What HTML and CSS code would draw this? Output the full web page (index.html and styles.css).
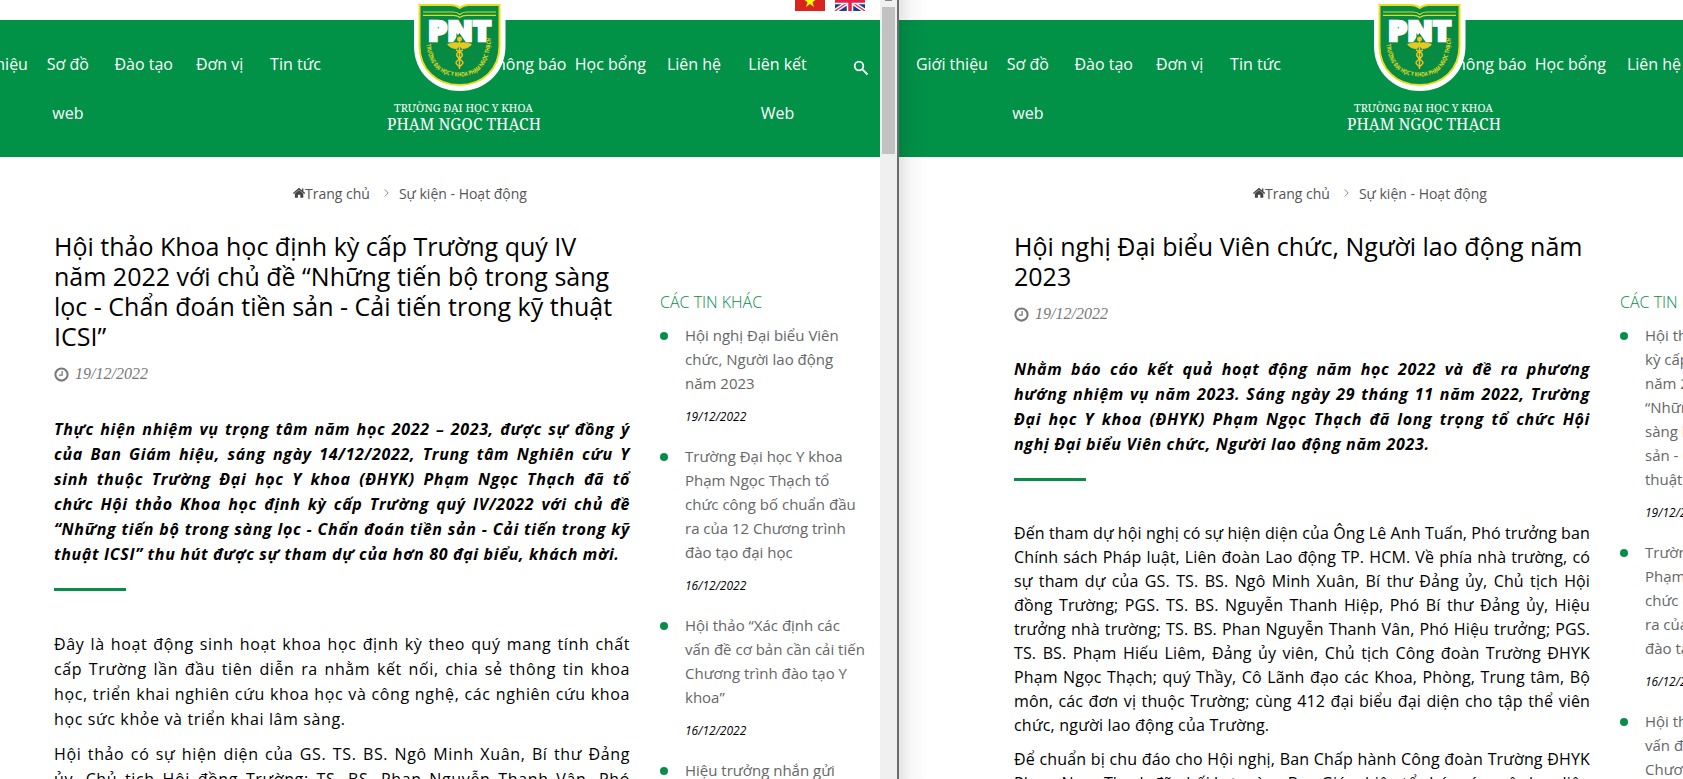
FILE: index.html
```html
<!DOCTYPE html>
<html lang="vi">
<head>
<meta charset="utf-8">
<title>Trường Đại học Y khoa Phạm Ngọc Thạch</title>
<link rel="stylesheet" href="styles.css">
</head>
<body>
<svg class="defs" width="0" height="0" aria-hidden="true">
  <symbol id="logo" viewBox="0 0 160 132">
    <path d="M34 0H125.500V46C125.500 72 106 91 79.750 91S34 72 34 46Z" fill="#fff"/>
    <path d="M39.500 5H71Q76 5 79.750 8Q83.500 5 88.500 5H119.500V46C119.500 69 102.500 85 79.500 85S39.500 69 39.500 46Z" fill="#078a42" stroke="#e9dc1f" stroke-width="2"/>
    <path d="M43 12H73Q77 12 79.750 14.500Q82.500 12 86.500 12H116M43 15.300H73Q77 15.300 79.750 17.500Q82.500 15.300 86.500 15.300H116" fill="none" stroke="#d8dc2a" stroke-width="1.200"/>
    <text class="pnt" x="48" y="41" textLength="63" lengthAdjust="spacingAndGlyphs">PNT</text>
    <path d="M72 44L79.500 33L87 44Z" fill="#078a42"/>
    <g fill="none" stroke="#e6c728" stroke-width="1.500">
      <path d="M79.500 41V69"/>
      <path d="M76 50Q84 53 82 56T77 61T80 67M83 50Q75 53 77 56T82 61T79 67"/>
    </g>
    <circle cx="79.500" cy="39" r="2.500" fill="#e6c728"/>
    <path d="M79.500 43Q75 41 67 44Q70 49 77 49L79.500 46L82 49Q89 49 92 44Q84 41 79.500 43Z" fill="#e6c728"/>
    <path id="arc" d="M46.500 44C48 66 61 76.500 79.500 76.500S111 66 111.500 30" fill="none"/>
    <text class="ring"><textPath href="#arc" textLength="108" lengthAdjust="spacingAndGlyphs">TRƯỜNG ĐẠI HỌC Y KHOA PHẠM NGỌC THẠCH</textPath></text>
    <text class="name-s" x="14" y="112" textLength="139" lengthAdjust="spacingAndGlyphs">TRƯỜNG ĐẠI HỌC Y KHOA</text>
    <text class="name-l" x="7" y="130" textLength="154" lengthAdjust="spacingAndGlyphs">PHẠM NGỌC THẠCH</text>
  </symbol>
  <symbol id="home" viewBox="0 0 12 11">
    <path d="M6 2.600L10.300 6V10.200H7.300V7.200H4.900V10.200H1.900V6Z"/>
    <path d="M0.400 5.900L6 1.200L11.800 5.900M9.700 1V4.200" fill="none" stroke="currentColor" stroke-width="1.300"/>
  </symbol>
  <symbol id="clock" viewBox="0 0 14 14">
    <circle cx="7" cy="7" r="5.700" fill="none" stroke="currentColor" stroke-width="1.900"/>
    <path d="M7.600 3.800V7.600H4.600" fill="none" stroke="currentColor" stroke-width="1.200"/>
  </symbol>
</svg>

<div class="desktop">
  <section class="pane pane-left">
    <div class="page">
      <div class="topbar">
        <svg class="flag" viewBox="0 0 30 20"><path fill="#d9251d" d="M0 0H30V20H0Z"/><path fill="#ff0" d="M15 3.500L16.600 8.200H21.500L17.500 11.200L19 16L15 13.100L11 16L12.500 11.200L8.500 8.200H13.400Z"/></svg>
        <svg class="flag" viewBox="0 0 30 20"><path fill="#1d3f93" d="M0 0H30V20H0Z"/><path d="M0 0L30 20M30 0L0 20" stroke="#fff" stroke-width="4"/><path d="M0 0L30 20M30 0L0 20" stroke="#e0234a" stroke-width="1.200"/><path d="M15 0V20M0 10H30" stroke="#fff" stroke-width="6.500"/><path d="M15 0V20M0 10H30" stroke="#e8204a" stroke-width="3.500"/></svg>
      </div>
      <header class="header">
        <nav class="nav nav-a"><a>Giới thiệu</a><a>Sơ đồ<br>web</a><a>Đào tạo</a><a>Đơn vị</a><a>Tin tức</a></nav>
        <nav class="nav nav-b"><a>Thông báo</a><a>Học bổng</a><a>Liên hệ</a><a>Liên kết<br>Web</a></nav>
        <svg class="search" viewBox="0 0 16 16"><circle cx="6" cy="6" r="4.300"/><path d="M9.200 9.200L14.500 14.500"/></svg>
        <svg class="logo"><use href="#logo"/></svg>
      </header>
      <div class="crumbs"><svg class="home"><use href="#home"/></svg><span>Trang chủ</span><svg class="chev" viewBox="0 0 5 8"><path d="M0.700 0.500L4.200 4L0.700 7.500"/></svg><span>Sự kiện - Hoạt động</span></div>
      <div class="columns">
        <article class="article">
          <h1>Hội thảo Khoa học định kỳ cấp Trường quý IV năm 2022 với chủ đề “Những tiến bộ trong sàng lọc - Chẩn đoán tiền sản - Cải tiến trong kỹ thuật ICSI”</h1>
          <div class="date"><svg class="clock"><use href="#clock"/></svg><span>19/12/2022</span></div>
          <p class="lead">Thực hiện nhiệm vụ trọng tâm năm học 2022 – 2023, được sự đồng ý của Ban Giám hiệu, sáng ngày 14/12/2022, Trung tâm Nghiên cứu Y sinh thuộc Trường Đại học Y khoa (ĐHYK) Phạm Ngọc Thạch đã tổ <span class="keep">chức Hội</span> thảo Khoa học định kỳ cấp Trường quý IV/2022 với chủ đề “Những tiến bộ trong sàng lọc - Chẩn đoán tiền sản - Cải tiến trong kỹ thuật ICSI” thu hút được sự tham dự của hơn 80 đại biểu, khách mời.</p>
          <div class="rule"></div>
          <div class="body body-wide">
            <p>Đây là hoạt động sinh hoạt khoa học định kỳ theo quý mang tính chất cấp Trường lần đầu tiên diễn ra nhằm kết nối, chia sẻ thông tin khoa học, triển khai nghiên cứu khoa học và công nghệ, các nghiên cứu khoa học sức khỏe và triển khai lâm sàng.</p>
            <p>Hội thảo có sự hiện diện của GS. TS. BS. Ngô Minh Xuân, Bí thư Đảng ủy, Chủ tịch Hội đồng Trường; TS. BS. Phan Nguyễn Thanh Vân, Phó Hiệu trưởng.</p>
          </div>
        </article>
        <aside class="aside">
          <h2>CÁC TIN KHÁC</h2>
          <ul>
            <li><a>Hội nghị Đại biểu Viên chức, Người lao động năm 2023</a><time>19/12/2022</time></li>
            <li><a>Trường Đại học Y khoa Phạm Ngọc Thạch tổ chức công bố chuẩn đầu ra của 12 Chương trình đào tạo đại học</a><time>16/12/2022</time></li>
            <li><a>Hội thảo “Xác định các vấn đề cơ bản cần cải tiến Chương trình đào tạo Y khoa”</a><time>16/12/2022</time></li>
            <li><a>Hiệu trưởng nhắn gửi</a></li>
          </ul>
        </aside>
      </div>
    </div>
  </section>
  <div class="scrollbar"><div class="arrow"></div><div class="thumb"></div></div>
  <section class="pane pane-right">
    <div class="page">
      <div class="topbar"></div>
      <header class="header">
        <nav class="nav nav-a"><a>Giới thiệu</a><a>Sơ đồ<br>web</a><a>Đào tạo</a><a>Đơn vị</a><a>Tin tức</a></nav>
        <nav class="nav nav-b"><a>Thông báo</a><a>Học bổng</a><a>Liên hệ</a></nav>
        <svg class="logo"><use href="#logo"/></svg>
      </header>
      <div class="crumbs"><svg class="home"><use href="#home"/></svg><span>Trang chủ</span><svg class="chev" viewBox="0 0 5 8"><path d="M0.700 0.500L4.200 4L0.700 7.500"/></svg><span>Sự kiện - Hoạt động</span></div>
      <div class="columns">
        <article class="article">
          <h1>Hội nghị Đại biểu Viên chức, Người lao động năm 2023</h1>
          <div class="date"><svg class="clock"><use href="#clock"/></svg><span>19/12/2022</span></div>
          <p class="lead">Nhằm báo cáo kết quả hoạt động năm học 2022 và đề ra phương hướng nhiệm vụ năm 2023. Sáng ngày 29 tháng 11 năm 2022, Trường Đại học Y khoa (ĐHYK) Phạm Ngọc Thạch đã long trọng tổ chức Hội nghị Đại biểu Viên chức, Người lao động năm 2023.</p>
          <div class="rule"></div>
          <div class="body">
            <p>
              <span class="line">Đến tham dự hội nghị có sự hiện diện của Ông Lê Anh Tuấn, Phó trưởng ban</span>
              <span class="line">Chính sách Pháp luật, Liên đoàn Lao động TP. HCM. Về phía nhà trường, có</span>
              <span class="line">sự tham dự của GS. TS. BS. Ngô Minh Xuân, Bí thư Đảng ủy, Chủ tịch Hội</span>
              <span class="line">đồng Trường; PGS. TS. BS. Nguyễn Thanh Hiệp, Phó Bí thư Đảng ủy, Hiệu</span>
              <span class="line">trưởng nhà trường; TS. BS. Phan Nguyễn Thanh Vân, Phó Hiệu trưởng; PGS.</span>
              <span class="line">TS. BS. Phạm Hiếu Liêm, Đảng ủy viên, Chủ tịch Công đoàn Trường ĐHYK</span>
              <span class="line">Phạm Ngọc Thạch; quý Thầy, Cô Lãnh đạo các Khoa, Phòng, Trung tâm, Bộ</span>
              <span class="line">môn, các đơn vị thuộc Trường; cùng 412 đại biểu đại diện cho tập thể viên</span>
              <span class="line last">chức, người lao động của Trường.</span>
            </p>
            <p>
              <span class="line">Để chuẩn bị chu đáo cho Hội nghị, Ban Chấp hành Công đoàn Trường ĐHYK</span>
              <span class="line">Phạm Ngọc Thạch đã phối hợp cùng Ban Giám hiệu tổ chức các cuộc họp liên</span>
            </p>
          </div>
        </article>
        <aside class="aside">
          <h2>CÁC TIN KHÁC</h2>
          <ul>
            <li><a>Hội thảo Khoa học định kỳ cấp Trường quý IV năm 2022 với chủ đề “Những tiến bộ trong sàng lọc - Chẩn đoán tiền sản - Cải tiến trong kỹ thuật ICSI”</a><time>19/12/2022</time></li>
            <li><a>Trường Đại học Y khoa Phạm Ngọc Thạch tổ chức công bố chuẩn đầu ra của 12 Chương trình đào tạo đại học</a><time>16/12/2022</time></li>
            <li><a>Hội thảo “Xác định các vấn đề cơ bản cần cải tiến Chương trình đào tạo Y khoa”</a></li>
          </ul>
        </aside>
      </div>
    </div>
  </section>
</div>
</body>
</html>
```
FILE: styles.css
```css
* { box-sizing: border-box; }
body { margin: 0; background: #fff; font-family: "Open Sans", "Noto Sans", sans-serif; color: #000; overflow: hidden; }
h1, h2, p, ul { margin: 0; padding: 0; font-weight: 400; }
.defs { position: absolute; }
.desktop { display: flex; width: 1683px; height: 779px; overflow: hidden; }
.pane { height: 779px; overflow: hidden; display: flex; align-items: flex-start; }
.pane-left { width: 880px; justify-content: flex-end; }
.pane-right { width: 784px; position: relative; }
.pane-right::after { content: ""; position: absolute; inset: 0 auto 0 0; width: 30px; background: linear-gradient(90deg, rgba(0,0,0,.1), rgba(0,0,0,.03) 40%, transparent); }
.scrollbar { width: 19px; background: #f0f0f0; border-right: 2px solid #6a6d6d; padding: 0 2px; }
.arrow { width: 7px; height: 1px; margin: 0 3px 6px; background: #858585; }
.thumb { height: 147px; width: 13px; background: #c1c1c1; }
.page { width: 941px; flex: none; }
.topbar { height: 20px; display: flex; justify-content: flex-end; align-items: flex-end; gap: 10px; padding: 0 15px 9px 0; }
.flag { width: 30px; height: 20px; flex: none; }
.header { height: 137px; background: #019147; position: relative; display: flex; padding-left: 15px; }
.nav { display: flex; color: #fff; font-size: 16px; line-height: 49px; padding-top: 20px; text-align: center; white-space: nowrap; }
.nav a { display: flex; justify-content: center; flex: none; }
.nav-a { width: 531px; }
.nav-a a { width: 75.9px; }
.nav-b a { width: 83.6px; }
.search { width: 16px; height: 16px; margin: 40px 0 0 34px; fill: none; stroke: #fff; stroke-width: 1.8; }
.logo { position: absolute; left: 441px; top: -20px; width: 160px; height: 132px; overflow: visible; }
.pnt { font: 800 28px "Open Sans", sans-serif; fill: #fff; stroke: #fff; stroke-width: 2.5px; }
.ring { font: 700 6px "Open Sans", sans-serif; fill: #e3dc22; }
.name-s { font: 11px "Noto Serif", "DejaVu Serif", serif; fill: #fff; }
.name-l { font: 16px "Noto Serif", "DejaVu Serif", serif; fill: #fff; }
.crumbs { display: flex; align-items: center; padding: 0 0 2px 354px; height: 74px; font-size: 14px; color: #555; }
.home { width: 12px; height: 12px; fill: #444; color: #444; }
.chev { width: 5px; height: 8px; margin: 0 10px 0 14px; fill: none; stroke: #888; }
.columns { display: flex; padding-left: 115px; }
.article { width: 576px; }
h1 { font-size: 25px; line-height: 30px; }
.date { display: flex; align-items: center; gap: 6px; height: 20px; margin-top: 13px; color: #777; font: italic 16px "Liberation Serif", serif; }
.clock { width: 15px; height: 15px; }
.lead { margin-top: 33px; font-size: 16px; font-weight: 700; font-style: italic; line-height: 25px; letter-spacing: .66px; text-align: justify; }
.keep { white-space: nowrap; }
.rule { width: 72px; height: 3px; background: #078c4a; margin: 21px 0 40px; }
.body { font-size: 16px; line-height: 24px; letter-spacing: .13px; text-align: justify; }
.line { display: block; height: 24px; word-spacing: -1.2px; text-align-last: justify; }
.line.last { text-align-last: left; word-spacing: 0; letter-spacing: .2px; }
.body-wide { line-height: 25px; letter-spacing: .63px; padding-top: 1px; }
.body p { margin-bottom: 10px; }
.aside { width: 205px; margin-left: 30px; padding-top: 58px; }
h2 { font-size: 16px; font-weight: 300; line-height: 26px; color: #0b8a49; }
ul { list-style: none; margin-top: 8px; }
li { position: relative; padding-left: 25px; font-size: 15px; line-height: 24px; color: #666; margin-bottom: 15px; }
li::before { content: ""; position: absolute; left: 0; top: 9px; width: 8px; height: 8px; border-radius: 50%; background: #078c4a; }
li a { display: block; }
time { display: block; margin-top: 10px; font-size: 12px; font-style: italic; color: #000; line-height: 24px; }
```
